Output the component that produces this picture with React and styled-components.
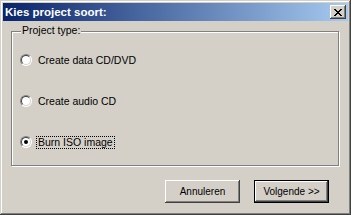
import React, { useState } from "react";
import styled, { createGlobalStyle } from "styled-components";

const GlobalStyle = createGlobalStyle`
  html, body { margin: 0; padding: 0; background: #d4d0c8; }
  * { box-sizing: border-box; }
`;

const Window = styled.div`
  width: 351px;
  height: 215px;
  padding: 3px;
  display: flex;
  flex-direction: column;
  background: #d4d0c8;
  box-shadow: inset -1px -1px 0 #404040, inset 1px 1px 0 #d4d0c8,
    inset -2px -2px 0 #808080, inset 2px 2px 0 #ffffff;
  font-family: "Liberation Sans", Arial, sans-serif;
  color: #000;
`;

const TitleBar = styled.div`
  height: 18px;
  display: flex;
  align-items: center;
  justify-content: space-between;
  padding: 0 2px 0 2px;
  background: linear-gradient(to right, #0a246a, #a6caf0);
`;

const TitleText = styled.span`
  color: #fff;
  font-weight: bold;
  font-size: 11.5px;
  line-height: 14px;
  white-space: nowrap;
`;

const CloseButton = styled.button`
  width: 16px;
  height: 14px;
  padding: 0;
  border: none;
  background: #d4d0c8;
  display: flex;
  align-items: center;
  justify-content: center;
  box-shadow: inset -1px -1px 0 #404040, inset 1px 1px 0 #ffffff,
    inset -2px -2px 0 #808080, inset 2px 2px 0 #d4d0c8;
`;

const Body = styled.div`
  flex: 1;
  padding: 10px 8px 0 8px;
  display: flex;
  flex-direction: column;
`;

const GroupBox = styled.div`
  position: relative;
  width: 328px;
  height: 135px;
  border: 1px solid #808080;
  box-shadow: 1px 1px 0 #ffffff, inset 1px 1px 0 #ffffff;
  padding: 22px 0 0 8px;
  display: flex;
  flex-direction: column;
  gap: 28px;
`;

const GroupLabel = styled.span`
  position: absolute;
  top: -8px;
  left: 9px;
  padding: 0 1px;
  background: #d4d0c8;
  font-size: 10.5px;
  line-height: 13px;
  white-space: nowrap;
`;

const Row = styled.label`
  display: flex;
  align-items: flex-start;
  gap: 4px;
  height: 13px;
  cursor: default;
`;

const RadioCircle = styled.span`
  position: relative;
  flex: none;
  width: 12px;
  height: 12px;
  border-radius: 50%;
  border: 1px solid;
  border-color: #808080 #ffffff #ffffff #808080;
  background: #ffffff;
  &::before {
    content: "";
    position: absolute;
    inset: 0;
    border-radius: 50%;
    border: 1px solid;
    border-color: #404040 #d4d0c8 #d4d0c8 #404040;
  }
  &::after {
    content: "";
    display: ${(p) => (p.$checked ? "block" : "none")};
    position: absolute;
    left: 3px;
    top: 3px;
    width: 4px;
    height: 4px;
    border-radius: 50%;
    background: #000;
  }
`;

const RadioText = styled.span`
  font-size: 10.5px;
  line-height: 11px;
  padding: 0 1px;
  border: 1px dotted ${(p) => (p.$focused ? "#000" : "transparent")};
  white-space: nowrap;
`;

const ButtonRow = styled.div`
  display: flex;
  justify-content: flex-end;
  gap: 14px;
  margin-top: 14px;
  padding-right: 11px;
`;

const Button = styled.button`
  width: 75px;
  height: 23px;
  padding: 0;
  background: #d4d0c8;
  font-family: "Liberation Sans", Arial, sans-serif;
  font-size: 10px;
  color: #000;
  border: ${(p) => (p.$default ? "1px solid #000" : "none")};
  box-shadow: inset -1px -1px 0 #404040, inset 1px 1px 0 #ffffff,
    inset -2px -2px 0 #808080, inset 2px 2px 0 #d4d0c8;
`;

const CloseGlyph = () => (
  <svg width="8" height="7" viewBox="0 0 8 7" shapeRendering="crispEdges">
    <path
      fill="#000"
      d="M0 0h2v1H0zM6 0h2v1H6zM1 1h2v1H1zM5 1h2v1H5zM2 2h4v1H2zM3 3h2v1H3zM2 4h4v1H2zM1 5h2v1H1zM5 5h2v1H5zM0 6h2v1H0zM6 6h2v1H6z"
    />
  </svg>
);

const options = ["Create data CD/DVD", "Create audio CD", "Burn ISO image"];

export default function App() {
  const [selected, setSelected] = useState(2);
  return (
    <>
      <GlobalStyle />
      <Window>
        <TitleBar>
          <TitleText>Kies project soort:</TitleText>
          <CloseButton aria-label="Close">
            <CloseGlyph />
          </CloseButton>
        </TitleBar>
        <Body>
          <GroupBox>
            <GroupLabel>Project type:</GroupLabel>
            {options.map((o, i) => (
              <Row key={o} onClick={() => setSelected(i)}>
                <RadioCircle $checked={selected === i} />
                <RadioText $focused={selected === i}>{o}</RadioText>
              </Row>
            ))}
          </GroupBox>
          <ButtonRow>
            <Button>Annuleren</Button>
            <Button $default>Volgende &gt;&gt;</Button>
          </ButtonRow>
        </Body>
      </Window>
    </>
  );
}
